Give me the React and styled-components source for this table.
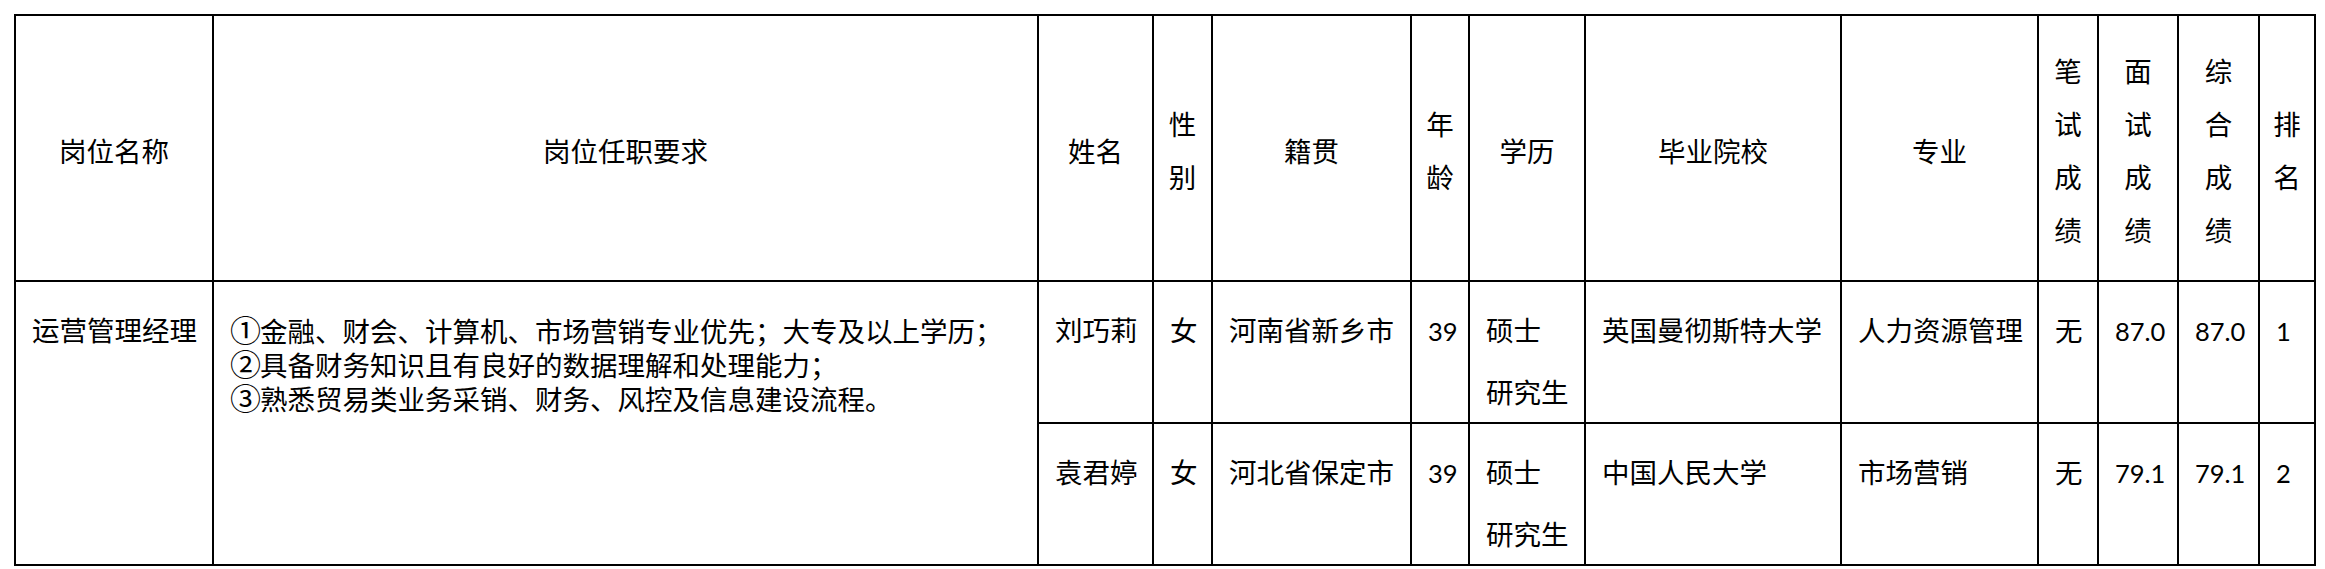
import React from 'react';
import styled, { createGlobalStyle } from 'styled-components';

const GlobalStyle = createGlobalStyle`
  html, body {
    margin: 0;
    padding: 0;
    background: #fff;
  }
  body {
    font-family: "Noto Sans CJK SC", "Noto Sans", sans-serif;
    color: #000;
  }
`;

const Page = styled.div`
  padding: 14px 0 0 14px;
`;

const Table = styled.table`
  border-collapse: collapse;
  table-layout: fixed;
  width: 2302px;
  font-size: 27.5px;
`;

const Col = styled.col`
  width: ${p => p.$w}px;
`;

const Row = styled.tr`
  height: ${p => p.$h}px;
`;

const HeadCell = styled.th`
  border: 2px solid #000;
  font-weight: 400;
  text-align: center;
  vertical-align: middle;
  line-height: 53px;
  padding: 4px 0 0;
`;

// 竖排表头：一字一行
const Stack = styled.span`
  display: inline-block;
  width: 1em;
  word-break: break-all;
`;

const Cell = styled.td`
  border: 2px solid #000;
  vertical-align: top;
  text-align: ${p => p.$align || 'left'};
  padding: ${p => (p.$tall ? '16px' : '30px')} 16px 0;
  line-height: ${p => (p.$tall ? '62px' : '34px')};
  white-space: nowrap;
`;

const Num = styled.span`
  font-family: "Lato", "Open Sans", sans-serif;
  font-size: 25.5px;
`;

const Line = styled.div`
  height: 34px;
  white-space: nowrap;
`;

// 序号圈字
const Mark = styled.span`
  display: inline-block;
  width: 30px;
  font-size: 31px;
  line-height: 34px;
  text-align: center;
`;

const widths = [198, 825, 115, 59, 199, 58, 116, 256, 197, 60, 80, 81, 56];

const headers = [
  { label: '岗位名称' },
  { label: '岗位任职要求' },
  { label: '姓名' },
  { label: '性别', v: true },
  { label: '籍贯' },
  { label: '年龄', v: true },
  { label: '学历' },
  { label: '毕业院校' },
  { label: '专业' },
  { label: '笔试成绩', v: true },
  { label: '面试成绩', v: true },
  { label: '综合成绩', v: true },
  { label: '排名', v: true },
];

const requirements = [
  { n: '①', t: '金融、财会、计算机、市场营销专业优先；大专及以上学历；' },
  { n: '②', t: '具备财务知识且有良好的数据理解和处理能力；' },
  { n: '③', t: '熟悉贸易类业务采销、财务、风控及信息建设流程。' },
];

const people = [
  {
    name: '刘巧莉', sex: '女', home: '河南省新乡市', age: '39',
    school: '英国曼彻斯特大学', major: '人力资源管理',
    written: '无', interview: '87.0', total: '87.0', rank: '1', h: 141,
  },
  {
    name: '袁君婷', sex: '女', home: '河北省保定市', age: '39',
    school: '中国人民大学', major: '市场营销',
    written: '无', interview: '79.1', total: '79.1', rank: '2', h: 140,
  },
];

function App() {
  return (
    <Page>
      <GlobalStyle />
      <Table>
        <colgroup>
          {widths.map((w, i) => <Col key={i} $w={w} />)}
        </colgroup>
        <thead>
          <Row $h={266}>
            {headers.map(h => (
              <HeadCell key={h.label}>
                {h.v ? <Stack>{h.label}</Stack> : h.label}
              </HeadCell>
            ))}
          </Row>
        </thead>
        <tbody>
          {people.map((p, i) => (
            <Row key={p.name} $h={p.h}>
              {i === 0 && (
                <>
                  <Cell rowSpan={2}>运营管理经理</Cell>
                  <Cell rowSpan={2}>
                    {requirements.map(r => (
                      <Line key={r.n}><Mark>{r.n}</Mark>{r.t}</Line>
                    ))}
                  </Cell>
                </>
              )}
              <Cell $align="center">{p.name}</Cell>
              <Cell $align="center">{p.sex}</Cell>
              <Cell $align="center">{p.home}</Cell>
              <Cell $align="center"><Num>{p.age}</Num></Cell>
              <Cell $tall>硕士<br />研究生</Cell>
              <Cell>{p.school}</Cell>
              <Cell>{p.major}</Cell>
              <Cell $align="center">{p.written}</Cell>
              <Cell $align="center"><Num>{p.interview}</Num></Cell>
              <Cell $align="center"><Num>{p.total}</Num></Cell>
              <Cell><Num>{p.rank}</Num></Cell>
            </Row>
          ))}
        </tbody>
      </Table>
    </Page>
  );
}

export default App;
